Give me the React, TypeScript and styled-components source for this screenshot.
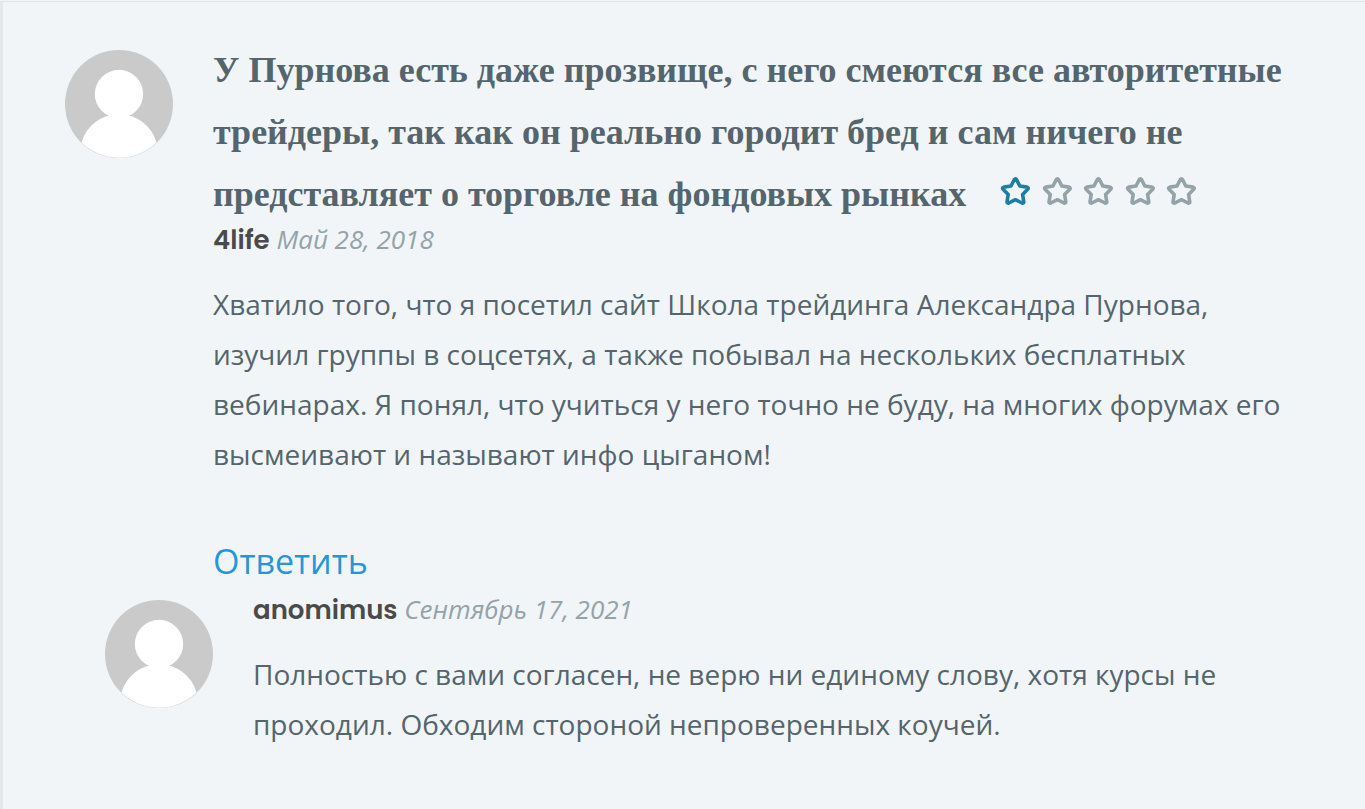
import React from "react";
import styled, { createGlobalStyle } from "styled-components";

const GlobalStyle = createGlobalStyle`
  * { box-sizing: border-box; }
  body {
    margin: 0;
    padding-top: 1px;
    background: #f1f5f8;
    color: #54656d;
    font-family: "Open Sans", "Noto Sans", sans-serif;
    font-size: 28px;
    line-height: 50px;
  }
`;

const Panel = styled.main`
  min-height: calc(100vh - 1px);
  padding: 37px 64px 56px 62px;
  border-top: 1px solid #e0e3e4;
  border-left: 3px solid #e4e8ea;
`;

const Comment = styled.article`
  display: flex;
  align-items: flex-start;
  gap: 40px;
`;

const Reply = styled(Comment)`
  margin-top: 4px;
  padding-left: 40px;
`;

const AvatarIcon = styled.svg`
  flex: none;
  width: 108px;
  height: 108px;
  margin-top: 11px;
`;

const ReplyAvatar = styled(AvatarIcon)`
  margin-top: 5px;
`;

const Body = styled.div`
  flex: 1;
  min-width: 0;
`;

const Title = styled.h2`
  margin: 0;
  font-family: "Liberation Serif", serif;
  font-size: 36px;
  font-weight: 700;
  line-height: 62px;
`;

const Rating = styled.span`
  display: inline-flex;
  justify-content: space-between;
  width: 196px;
  margin-left: 34px;
`;

const StarIcon = styled.svg<{ $active: boolean }>`
  width: 30px;
  height: 30px;
  fill: none;
  stroke: ${(p) => (p.$active ? "#1f7ea6" : "#94a3a8")};
  stroke-width: 3.6;
  stroke-linejoin: round;
`;

const Meta = styled.div`
  font-size: 26px;
  line-height: 28px;
`;

const Author = styled.strong`
  color: #4a4a4a;
  font-family: Poppins, Inter, sans-serif;
  font-weight: 600;
`;

const Posted = styled.time`
  color: #94a3a8;
  font-style: italic;
`;

const Text = styled.p`
  margin: 25px 0 0;
`;

const ReplyLink = styled.a`
  display: block;
  width: fit-content;
  margin-top: 52px;
  color: #2796d8;
  font-size: 34px;
  line-height: 60px;
  text-decoration: none;
`;

function Person() {
  return (
    <>
      <circle cx="54" cy="54" r="54" fill="#cacaca" />
      <circle cx="54" cy="44" r="24.2" fill="#fff" />
      <path d="M16.5 92.5A39 39 0 0 1 91.5 92.5A54 54 0 0 1 16.5 92.5Z" fill="#fff" />
    </>
  );
}

function Stars({ value }: { value: number }) {
  return (
    <Rating role="img" aria-label={`${value} из 5`}>
      {[1, 2, 3, 4, 5].map((n) => (
        <StarIcon key={n} viewBox="0 0 30 30" $active={n <= value}>
          <path d="M14.2 3.7Q15.4 2.1 16.6 3.7L19.8 10L27 11.1Q29 11.8 27.7 13.3L22.6 18.4L23.8 26Q23.6 27.6 22 27L15.4 23.7L8.8 27Q7.2 27.6 7 26L8.2 18.4L3.1 13.3Q1.8 11.8 3.8 11.1L11 10Z" />
        </StarIcon>
      ))}
    </Rating>
  );
}

export default function App() {
  return (
    <>
      <GlobalStyle />
      <Panel>
        <Comment>
          <AvatarIcon viewBox="0 0 108 108" aria-hidden="true"><Person /></AvatarIcon>
          <Body>
            <Title>
              У Пурнова есть даже прозвище, с него смеются все авторитетные трейдеры, так как он
              реально городит бред и сам ничего не представляет о торговле на фондовых рынках
              <Stars value={1} />
            </Title>
            <Meta>
              <Author>4life</Author> <Posted dateTime="2018-05-28">Май 28, 2018</Posted>
            </Meta>
            <Text>
              Хватило того, что я посетил сайт Школа трейдинга Александра Пурнова, изучил группы в
              соцсетях, а также побывал на нескольких бесплатных вебинарах. Я понял, что учиться у
              него точно не буду, на многих форумах его высмеивают и называют инфо цыганом!
            </Text>
            <ReplyLink href="#reply">Ответить</ReplyLink>
          </Body>
        </Comment>
        <Reply id="reply">
          <ReplyAvatar viewBox="0 0 108 108" aria-hidden="true"><Person /></ReplyAvatar>
          <Body>
            <Meta>
              <Author>anomimus</Author> <Posted dateTime="2021-09-17">Сентябрь 17, 2021</Posted>
            </Meta>
            <Text>
              Полностью с вами согласен, не верю ни единому слову, хотя курсы не проходил. Обходим
              стороной непроверенных коучей.
            </Text>
          </Body>
        </Reply>
      </Panel>
    </>
  );
}
